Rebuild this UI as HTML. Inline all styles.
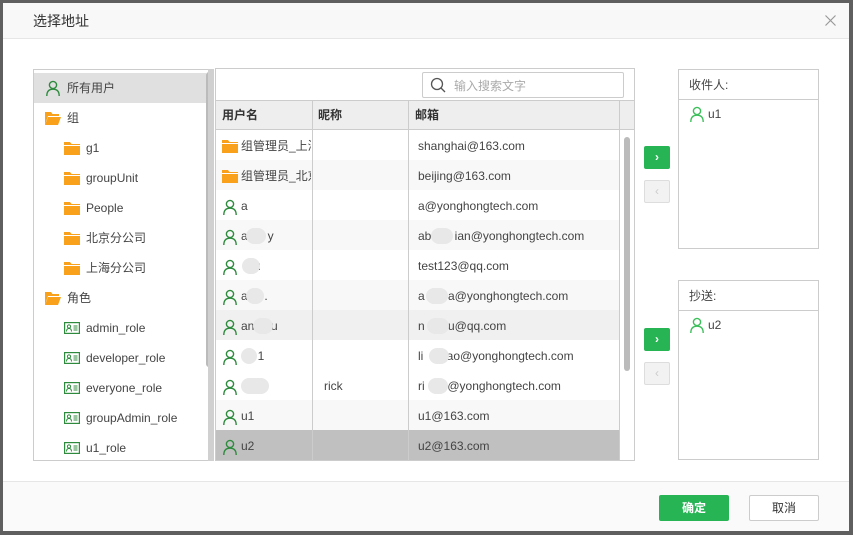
<!DOCTYPE html>
<html><head><meta charset="utf-8"><style>
*{margin:0;padding:0;box-sizing:border-box}
body{width:853px;height:535px;background:#5f5f5f;position:relative;overflow:hidden;font-family:"Liberation Sans","Noto Sans CJK SC",sans-serif;font-size:12px;color:#444}
.a{position:absolute}
#dlg{left:3px;top:3px;width:846px;height:528px;background:#fff}
.hdr{left:0;top:0;width:846px;height:36px;background:#f8f8f8;border-bottom:1px solid #e6e6e6}
.ftr{left:0;top:478px;width:846px;height:50px;background:#fafafa;border-top:1px solid #e6e6e6}
.box{border:1px solid #ccc;background:#fff}
.row{position:absolute;left:0;height:30px;line-height:30px;white-space:nowrap;overflow:hidden}
.blur{position:absolute;background:#e8e8e8;border-radius:8px;height:16px;top:7px}
svg{position:absolute}
</style></head><body>
<svg width="0" height="0" style="position:absolute">
<defs>
<symbol id="u" viewBox="0 0 16 16"><circle cx="8" cy="5" r="3.6" fill="none" stroke="#2e8b3e" stroke-width="1.4"/><path d="M1.8 16 C1.8 11 4.5 9.2 8 9.2 C11.5 9.2 14.2 11 14.2 16" fill="none" stroke="#2e8b3e" stroke-width="1.4"/></symbol>
<symbol id="ug" viewBox="0 0 16 16"><circle cx="8" cy="5" r="3.6" fill="none" stroke="#3cbf5a" stroke-width="1.4"/><path d="M1.8 16 C1.8 11 4.5 9.2 8 9.2 C11.5 9.2 14.2 11 14.2 16" fill="none" stroke="#3cbf5a" stroke-width="1.4"/></symbol>
<symbol id="f" viewBox="0 0 16 13"><path d="M0 0h6l1.5 2H16v11H0z" fill="#f9a11b"/><rect x="0" y="3" width="16" height="1" fill="#fff"/></symbol>
<symbol id="fo" viewBox="0 0 16 13"><path d="M0 0h6l1.5 2H14v2H3L0 13z" fill="#f9a11b"/><path d="M3 5h13l-3 8H0z" fill="#f9a11b"/></symbol>
<symbol id="r" viewBox="0 0 16 12"><rect x="0.6" y="0.6" width="14.8" height="10.8" fill="none" stroke="#2e8b3e" stroke-width="1.2"/><circle cx="5" cy="4.5" r="1.6" fill="none" stroke="#2e8b3e"/><path d="M2.5 9.5c0-2 1-3 2.5-3s2.5 1 2.5 3" fill="none" stroke="#2e8b3e"/><path d="M9.5 4h4M9.5 6h4M9.5 8h4" stroke="#2e8b3e"/></symbol>
</defs></svg>

<div id="dlg" class="a">
<div class="a hdr"><div class="a" style="left:30px;top:8px;font-size:14px;color:#333">选择地址</div>
<svg style="left:822px;top:12px" width="11" height="11" viewBox="0 0 11 11"><path d="M0.5 0.5L10.5 10.5M10.5 0.5L0.5 10.5" stroke="#999" stroke-width="1.2"/></svg></div>

<!-- left tree -->
<div class="a box" style="left:30px;top:66px;width:180px;height:392px;overflow:hidden">
<div class="a" style="left:0;top:3px;width:172px;height:30px;background:#e0e0e0"></div>
<div class="a" style="left:172px;top:2px;width:6px;height:295px;background:#bbb;border-radius:3px"></div>
<svg style="left:11px;top:10px" width="16" height="16"><use href="#u"/></svg><div class="row" style="left:33px;top:3px">所有用户</div>
<svg style="left:11px;top:42px" width="16" height="13"><use href="#fo"/></svg><div class="row" style="left:33px;top:33px">组</div>
<svg style="left:30px;top:72px" width="16" height="13"><use href="#f"/></svg><div class="row" style="left:52px;top:63px">g1</div>
<svg style="left:30px;top:102px" width="16" height="13"><use href="#f"/></svg><div class="row" style="left:52px;top:93px">groupUnit</div>
<svg style="left:30px;top:132px" width="16" height="13"><use href="#f"/></svg><div class="row" style="left:52px;top:123px">People</div>
<svg style="left:30px;top:162px" width="16" height="13"><use href="#f"/></svg><div class="row" style="left:52px;top:153px">北京分公司</div>
<svg style="left:30px;top:192px" width="16" height="13"><use href="#f"/></svg><div class="row" style="left:52px;top:183px">上海分公司</div>
<svg style="left:11px;top:222px" width="16" height="13"><use href="#fo"/></svg><div class="row" style="left:33px;top:213px">角色</div>
<svg style="left:30px;top:252px" width="16" height="12"><use href="#r"/></svg><div class="row" style="left:52px;top:243px">admin_role</div>
<svg style="left:30px;top:282px" width="16" height="12"><use href="#r"/></svg><div class="row" style="left:52px;top:273px">developer_role</div>
<svg style="left:30px;top:312px" width="16" height="12"><use href="#r"/></svg><div class="row" style="left:52px;top:303px">everyone_role</div>
<svg style="left:30px;top:342px" width="16" height="12"><use href="#r"/></svg><div class="row" style="left:52px;top:333px">groupAdmin_role</div>
<svg style="left:30px;top:372px" width="16" height="12"><use href="#r"/></svg><div class="row" style="left:52px;top:363px">u1_role</div>
</div>
<div class="a" style="left:205px;top:66px;width:6px;height:392px;background:#d0d0d0"></div>

<!-- table -->
<div class="a box" style="left:212px;top:65px;width:420px;height:393px;overflow:hidden">
<div class="a" style="left:206px;top:3px;width:202px;height:26px;border:1px solid #ccc;border-radius:2px"></div>
<svg style="left:214px;top:8px" width="16" height="16" viewBox="0 0 16 16"><circle cx="7" cy="7" r="5.5" fill="none" stroke="#555" stroke-width="1.3"/><path d="M11 11l4 4" stroke="#555" stroke-width="1.3"/></svg>
<div class="a" style="left:238px;top:8px;color:#aaa">输入搜索文字</div>
<div class="a" style="left:0;top:31px;width:420px;height:30px;background:#eee;border-top:1px solid #ccc;border-bottom:1px solid #ccc"></div>
<div class="row" style="left:6px;top:31px;font-weight:bold;color:#333">用户名</div>
<div class="row" style="left:102px;top:31px;font-weight:bold;color:#333">昵称</div>
<div class="row" style="left:199px;top:31px;font-weight:bold;color:#333">邮箱</div>
<div class="a" style="left:0;top:91px;width:404px;height:30px;background:#f8f8f8"></div>
<div class="a" style="left:0;top:151px;width:404px;height:30px;background:#f8f8f8"></div>
<div class="a" style="left:0;top:211px;width:404px;height:30px;background:#f8f8f8"></div>
<div class="a" style="left:0;top:241px;width:404px;height:30px;background:#f0f0f0"></div>
<div class="a" style="left:0;top:331px;width:404px;height:30px;background:#f8f8f8"></div>
<div class="a" style="left:0;top:361px;width:404px;height:31px;background:#c0c0c0"></div>
<div class="a" style="left:96px;top:31px;width:1px;height:362px;background:#ccc"></div>
<div class="a" style="left:192px;top:31px;width:1px;height:362px;background:#ccc"></div>
<div class="a" style="left:403px;top:31px;width:1px;height:362px;background:#ccc"></div>
<div class="a" style="left:408px;top:68px;width:6px;height:234px;background:#bbb;border-radius:3px"></div>
<svg style="left:6px;top:71px" width="16" height="13"><use href="#f"/></svg><div class="row" style="left:25px;top:62px;width:70px">组管理员_上海</div>
<svg style="left:6px;top:101px" width="16" height="13"><use href="#f"/></svg><div class="row" style="left:25px;top:92px;width:70px">组管理员_北京</div>
<svg style="left:6px;top:130px" width="16" height="16"><use href="#u"/></svg><div class="row" style="left:25px;top:122px">a</div>
<svg style="left:6px;top:160px" width="16" height="16"><use href="#u"/></svg><div class="row" style="left:25px;top:152px">a&nbsp;&nbsp;&nbsp;&nbsp;&nbsp;&nbsp;y</div><div class="blur" style="left:30px;top:159px;width:20px"></div>
<svg style="left:6px;top:190px" width="16" height="16"><use href="#u"/></svg><div class="row" style="left:25px;top:182px">&nbsp;&nbsp;&nbsp;&nbsp;&nbsp;:</div><div class="blur" style="left:26px;top:189px;width:18px"></div>
<svg style="left:6px;top:220px" width="16" height="16"><use href="#u"/></svg><div class="row" style="left:25px;top:212px">a&nbsp;&nbsp;&nbsp;&nbsp;&nbsp;.</div><div class="blur" style="left:30px;top:219px;width:18px"></div>
<svg style="left:6px;top:250px" width="16" height="16"><use href="#u"/></svg><div class="row" style="left:25px;top:242px">an&nbsp;&nbsp;&nbsp;&nbsp;&nbsp;u</div><div class="blur" style="left:37px;top:249px;width:20px"></div>
<svg style="left:6px;top:280px" width="16" height="16"><use href="#u"/></svg><div class="row" style="left:25px;top:272px">&nbsp;&nbsp;&nbsp;&nbsp;&nbsp;1</div><div class="blur" style="left:25px;top:279px;width:16px"></div>
<svg style="left:6px;top:310px" width="16" height="16"><use href="#u"/></svg><div class="blur" style="left:25px;top:309px;width:28px"></div>
<div class="row" style="left:108px;top:302px">rick</div>
<svg style="left:6px;top:340px" width="16" height="16"><use href="#u"/></svg><div class="row" style="left:25px;top:332px">u1</div>
<svg style="left:6px;top:370px" width="16" height="16"><use href="#u"/></svg><div class="row" style="left:25px;top:362px">u2</div>
<div class="row" style="left:202px;top:62px">shanghai@163.com</div>
<div class="row" style="left:202px;top:92px">beijing@163.com</div>
<div class="row" style="left:202px;top:122px">a@yonghongtech.com</div>
<div class="row" style="left:202px;top:152px">ab&nbsp;&nbsp;&nbsp;&nbsp;&nbsp;&nbsp;&nbsp;ian@yonghongtech.com</div><div class="blur" style="left:215px;top:159px;width:22px"></div>
<div class="row" style="left:202px;top:182px">test123@qq.com</div>
<div class="row" style="left:202px;top:212px">a&nbsp;&nbsp;&nbsp;&nbsp;&nbsp;&nbsp;&nbsp;a@yonghongtech.com</div><div class="blur" style="left:210px;top:219px;width:22px"></div>
<div class="row" style="left:202px;top:242px">n&nbsp;&nbsp;&nbsp;&nbsp;&nbsp;&nbsp;&nbsp;u@qq.com</div><div class="blur" style="left:211px;top:249px;width:22px"></div>
<div class="row" style="left:202px;top:272px">li&nbsp;&nbsp;&nbsp;&nbsp;&nbsp;&nbsp;&nbsp;ao@yonghongtech.com</div><div class="blur" style="left:213px;top:279px;width:20px"></div>
<div class="row" style="left:202px;top:302px">ri&nbsp;&nbsp;&nbsp;&nbsp;&nbsp;&nbsp;i@yonghongtech.com</div><div class="blur" style="left:212px;top:309px;width:20px"></div>
<div class="row" style="left:202px;top:332px">u1@163.com</div>
<div class="row" style="left:202px;top:362px">u2@163.com</div>
</div>

<!-- arrows -->
<div class="a" style="left:641px;top:143px;width:26px;height:23px;background:#27b455;border-radius:2px;color:#fff;text-align:center;line-height:22px;font-weight:bold">›</div>
<div class="a" style="left:641px;top:177px;width:26px;height:23px;background:#f2f2f2;border:1px solid #ddd;border-radius:2px;color:#ccc;text-align:center;line-height:20px">‹</div>
<div class="a" style="left:641px;top:325px;width:26px;height:23px;background:#27b455;border-radius:2px;color:#fff;text-align:center;line-height:22px;font-weight:bold">›</div>
<div class="a" style="left:641px;top:359px;width:26px;height:23px;background:#f2f2f2;border:1px solid #ddd;border-radius:2px;color:#ccc;text-align:center;line-height:20px">‹</div>

<!-- recipients -->
<div class="a box" style="left:675px;top:66px;width:141px;height:180px">
<div class="a" style="left:0;top:0;width:139px;height:30px;border-bottom:1px solid #ccc;line-height:30px;padding-left:10px">收件人:</div>
<svg style="left:10px;top:36px" width="16" height="16"><use href="#ug"/></svg><div class="a" style="left:29px;top:37px">u1</div>
</div>
<div class="a box" style="left:675px;top:277px;width:141px;height:180px">
<div class="a" style="left:0;top:0;width:139px;height:30px;border-bottom:1px solid #ccc;line-height:30px;padding-left:10px">抄送:</div>
<svg style="left:10px;top:36px" width="16" height="16"><use href="#ug"/></svg><div class="a" style="left:29px;top:37px">u2</div>
</div>

<div class="a ftr">
<div class="a" style="left:656px;top:13px;width:70px;height:26px;background:#27b455;border-radius:2px;color:#fff;text-align:center;line-height:26px;font-weight:bold">确定</div>
<div class="a" style="left:746px;top:13px;width:70px;height:26px;background:#fff;border:1px solid #ccc;border-radius:2px;color:#333;text-align:center;line-height:24px">取消</div>
</div>
</div>
</body></html>
